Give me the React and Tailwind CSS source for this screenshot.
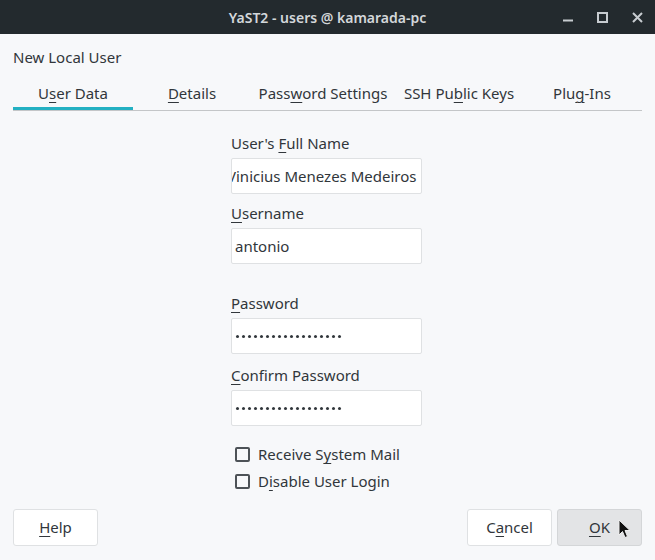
import React from "react";

const font = { fontFamily: '"Noto Sans", "Open Sans", sans-serif' };

const Acc = ({ children }) => (
  <span className="underline underline-offset-[3px] decoration-1">{children}</span>
);

const tabs = [
  { w: "w-[120px]", label: <>U<Acc>s</Acc>er Data</>, active: true },
  { w: "w-[118px]", label: <><Acc>D</Acc>etails</> },
  { w: "w-[144px]", label: <>Pass<Acc>w</Acc>ord Settings</> },
  { w: "w-[128px]", label: <>SSH Pu<Acc>b</Acc>lic Keys</> },
  { w: "w-[118px]", label: <>Plu<Acc>g</Acc>-Ins</> },
];

function Dots() {
  return (
    <div className="flex items-center gap-[3px] pl-[4px]">
      {Array.from({ length: 18 }).map((_, i) => (
        <span key={i} className="w-[3px] h-[3px] rounded-full bg-[#31363b]" />
      ))}
    </div>
  );
}

function Field({ label, children, className }) {
  return (
    <div className={className}>
      <div className="h-[22px] leading-[22px] text-[15px]">{label}</div>
      <div className="mt-[4px] h-[36px] w-[191px] bg-white border border-[#dfe1e3] rounded-[2px] flex items-center overflow-hidden">
        {children}
      </div>
    </div>
  );
}

function Check({ label }) {
  return (
    <div className="flex items-center h-[27px] pl-[4px]">
      <span className="w-[15px] h-[15px] border-2 border-[#4d5257] rounded-[2px]" />
      <span className="ml-[8px] text-[15px]">{label}</span>
    </div>
  );
}

export default function App() {
  return (
    <div className="w-[655px] h-[560px] bg-[#f7f8fa] text-[#31363b] flex flex-col relative overflow-hidden" style={font}>
      <div className="h-[34px] bg-[#232a2e] flex items-center relative shrink-0">
        <div className="flex-1 text-center text-[14px] font-semibold text-[#d3d7da]">
          YaST2 - users @ kamarada-pc
        </div>
        <div className="absolute right-[12px] top-0 h-[34px] flex items-center gap-[24px]">
          <svg width="10" height="10" viewBox="0 0 10 10">
            <rect x="0" y="7.5" width="10" height="2" fill="#c7ccd0" />
          </svg>
          <svg width="11" height="11" viewBox="0 0 11 11">
            <rect x="1" y="1" width="9" height="9" fill="none" stroke="#c7ccd0" strokeWidth="2" />
          </svg>
          <svg width="11" height="11" viewBox="0 0 11 11">
            <path d="M1 1L10 10M10 1L1 10" stroke="#c7ccd0" strokeWidth="2" />
          </svg>
        </div>
      </div>

      <div className="px-[13px] pt-[12px] text-[15px] h-[22px] leading-[22px] box-content">New Local User</div>

      <div className="mx-[13px] mt-[12px] flex border-b border-[#c4c6c8]">
        {tabs.map((t, i) => (
          <div key={i} className={`${t.w} flex flex-col text-center text-[15px]`}>
            <div className="h-[27px] leading-[27px]">{t.label}</div>
            <div className={`h-[3px] ${t.active ? "bg-[#23b0c2]" : ""}`} />
          </div>
        ))}
      </div>

      <div className="flex-1 flex justify-center">
        <div className="ml-[-2px] w-[191px] pt-[21px]">
          <Field label={<>User's <Acc>F</Acc>ull Name</>}>
            <span className="ml-[-5px] text-[15px] whitespace-nowrap">Vinicius Menezes Medeiros</span>
          </Field>
          <Field className="mt-[8px]" label={<><Acc>U</Acc>sername</>}>
            <span className="ml-[3px] text-[15px]">antonio</span>
          </Field>
          <Field className="mt-[28px]" label={<><Acc>P</Acc>assword</>}>
            <Dots />
          </Field>
          <Field className="mt-[10px]" label={<><Acc>C</Acc>onfirm Password</>}>
            <Dots />
          </Field>
          <div className="mt-[15px]">
            <Check label={<>Receive S<Acc>y</Acc>stem Mail</>} />
            <Check label={<>D<Acc>i</Acc>sable User Login</>} />
          </div>
        </div>
      </div>

      <div className="h-[37px] px-[13px] pb-[14px] flex items-start justify-between box-content">
        <button className="w-[85px] h-[37px] bg-white border border-[#dfe1e3] rounded-[3px] text-[15px]">
          <Acc>H</Acc>elp
        </button>
        <div className="flex gap-[5px]">
          <button className="w-[85px] h-[37px] bg-white border border-[#dfe1e3] rounded-[3px] text-[15px]">
            C<Acc>a</Acc>ncel
          </button>
          <button className="w-[85px] h-[37px] bg-[#e3e4e6] border border-[#d4d6d8] rounded-[3px] text-[15px]">
            <Acc>O</Acc>K
          </button>
        </div>
      </div>

      <svg className="absolute left-[618px] top-[519px]" width="14" height="22" viewBox="0 0 14 22">
        <path d="M1 1L1 16L4.5 12.5L7 18.5L9.5 17.5L7 11.5L12 11.5Z" fill="#111" stroke="#eee" strokeWidth="1" />
      </svg>
    </div>
  );
}
